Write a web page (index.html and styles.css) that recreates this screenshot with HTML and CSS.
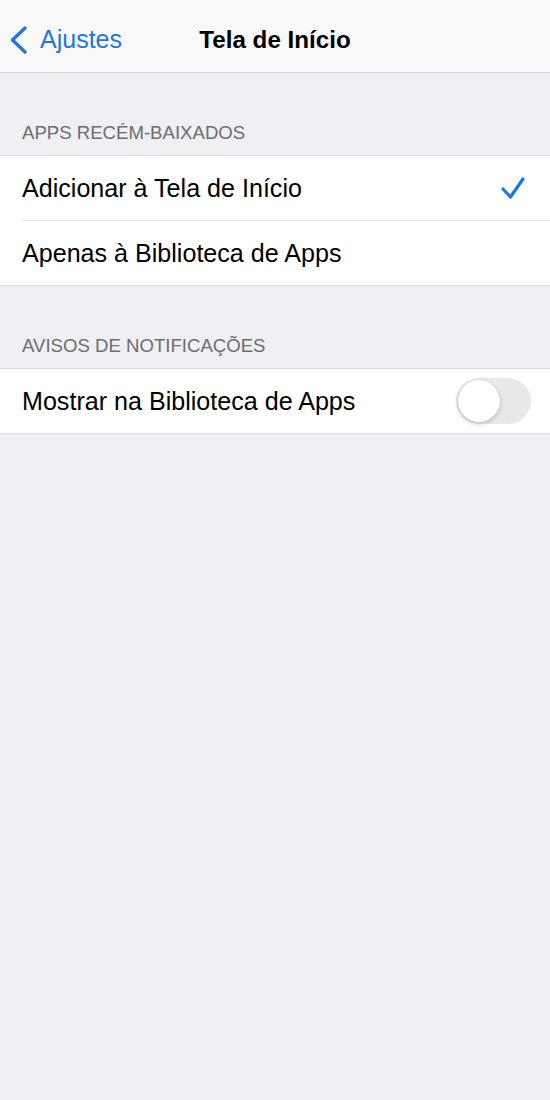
FILE: index.html
```html
<!DOCTYPE html>
<html lang="pt-BR">
<head>
<meta charset="utf-8">
<title>Tela de Início</title>
<link rel="stylesheet" href="styles.css">
</head>
<body>
<header class="nav">
  <a class="back">
    <svg class="chev" width="20" height="28" viewBox="0 0 20 28"><polyline points="16,2 3.5,14 16,26" fill="none" stroke="currentColor" stroke-width="3.4" stroke-linecap="round" stroke-linejoin="round"/></svg>
    <span>Ajustes</span>
  </a>
  <h1 class="title">Tela de Início</h1>
  <div></div>
</header>

<section>
  <div class="sec-head">APPS RECÉM-BAIXADOS</div>
  <ul class="group">
    <li class="row"><span class="label">Adicionar à Tela de Início</span>
      <svg class="check" width="26" height="24" viewBox="0 0 26 24"><polyline points="3,13 10.5,21 23,3" fill="none" stroke="currentColor" stroke-width="3.2" stroke-linecap="round" stroke-linejoin="round"/></svg>
    </li>
    <li class="row"><span class="label">Apenas à Biblioteca de Apps</span></li>
  </ul>
</section>

<section>
  <div class="sec-head">AVISOS DE NOTIFICAÇÕES</div>
  <ul class="group">
    <li class="row"><span class="label">Mostrar na Biblioteca de Apps</span>
      <span class="toggle"><span class="knob"></span></span>
    </li>
  </ul>
</section>
</body>
</html>
```

FILE: styles.css
```css
* { box-sizing: border-box; }
html, body { margin: 0; padding: 0; }
body {
  width: 550px;
  min-height: 1100px;
  background: #efeff4;
  font-family: "Liberation Sans", Arial, sans-serif;
  color: #000;
}
.nav {
  height: 73px;
  background: #f9f9f9;
  border-bottom: 1px solid #d6d6da;
  display: grid;
  grid-template-columns: 1fr auto 1fr;
  align-items: center;
}
.back {
  display: flex;
  align-items: center;
  color: #1e76e4;
  font-size: 25px;
  padding-left: 9px;
  padding-top: 7px;
}
.chev { margin-right: 11px; }
.title {
  margin: 0;
  font-size: 24.2px;
  font-weight: bold;
  padding-top: 7px;
}
.sec-head {
  height: 82px;
  display: flex;
  align-items: flex-end;
  padding: 0 22px 11px;
  font-size: 18.6px;
  line-height: 22px;
  color: #6d6d72;
}
.group {
  list-style: none;
  margin: 0;
  padding: 0;
  background: #fff;
  border-top: 1px solid #dcdce0;
  border-bottom: 1px solid #dcdce0;
}
.row {
  height: 65px;
  display: flex;
  align-items: center;
  justify-content: space-between;
  margin-left: 22px;
  padding-right: 19px;
  border-bottom: 1px solid #e2e2e6;
}
.row:last-child { height: 64px; border-bottom: none; }
.label {
  font-size: 25.1px;
}
.check {
  color: #1e76e4;
  margin-right: 5px;
}
.toggle {
  width: 75px;
  height: 46px;
  border-radius: 23px;
  background: #e9e9ec;
  display: flex;
  align-items: center;
  padding-left: 2px;
}
.knob {
  width: 42px;
  height: 42px;
  border-radius: 50%;
  background: #fff;
  box-shadow: 0 2px 5px rgba(0,0,0,0.18), 0 0 0 0.5px rgba(0,0,0,0.06);
}
```
